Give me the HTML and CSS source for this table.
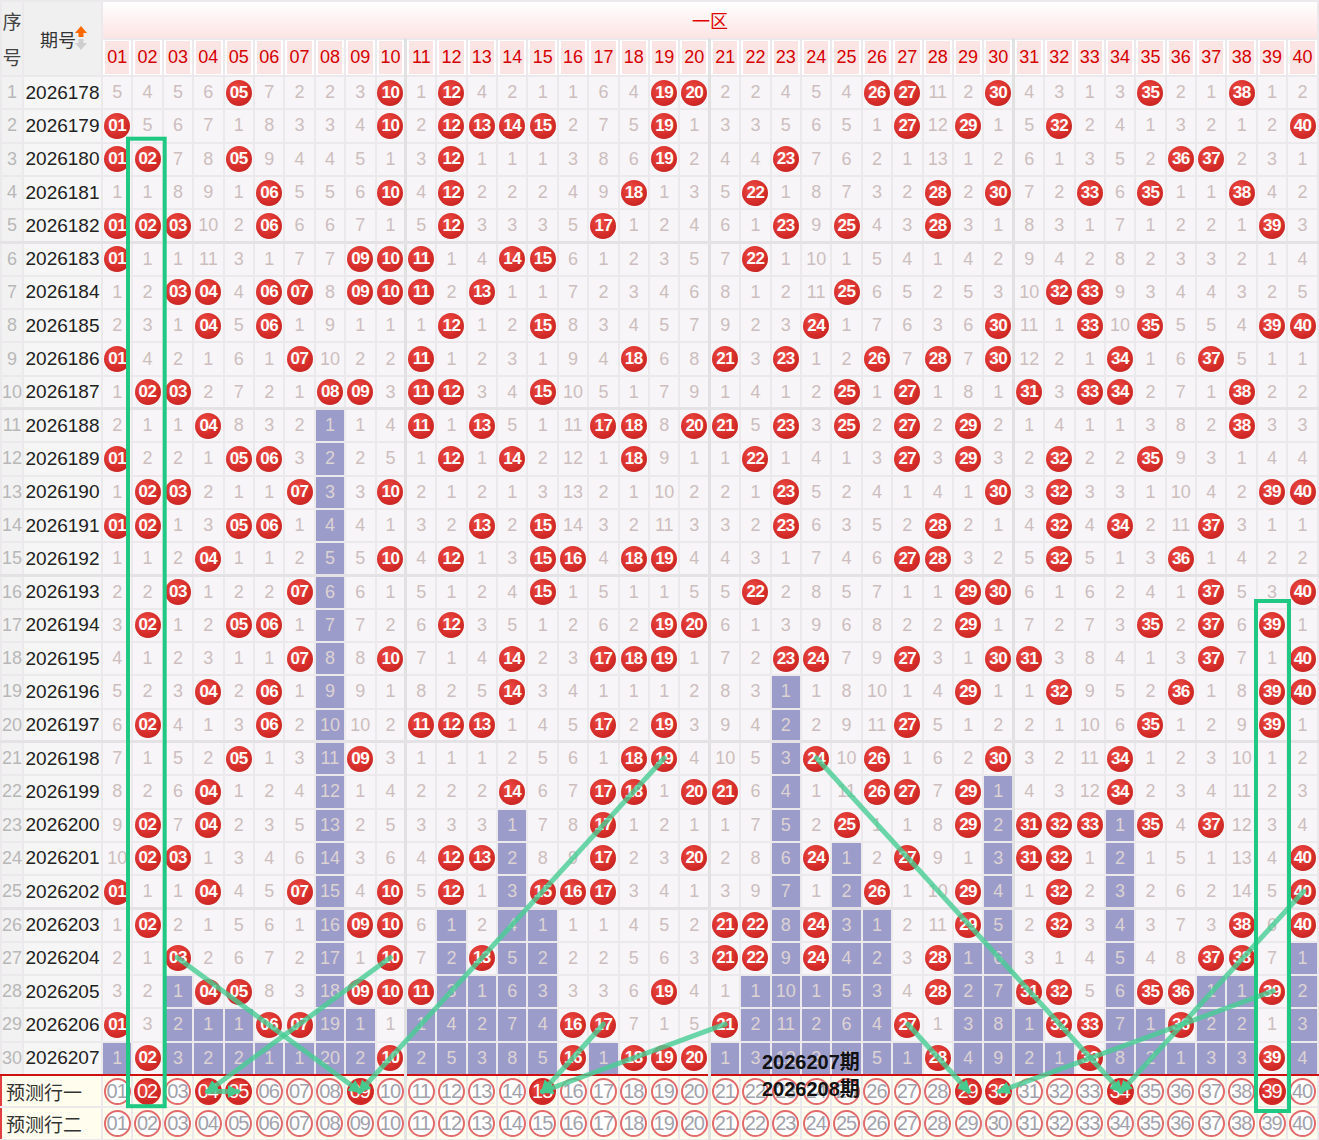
FILE: index.html
```html
<!DOCTYPE html>
<html lang="zh-CN">
<head>
<meta charset="utf-8">
<title>一区走势图</title>
<link rel="stylesheet" href="styles.css">
</head>
<body>
<div class="chart">
  <table class="grid">
    <colgroup><col class="c-idx"><col class="c-no"></colgroup>
    <thead>
      <tr class="h1">
        <th class="idx-h" rowspan="2"><span>序</span><span>号</span></th>
        <th class="no-h" rowspan="2"><span class="no-t">期号</span><svg class="sort" width="12" height="24" viewBox="0 0 12 24"><path d="M6 0 L12 7 H8.5 V11 H3.5 V7 H0 Z" fill="#ff6a00"/><path d="M3.5 13 H8.5 V17 H12 L6 24 L0 17 H3.5 Z" fill="#cfcfcf"/></svg></th>
        <th class="zone" colspan="40">一区</th>
      </tr>
      <tr class="h2" id="h2"></tr>
    </thead>
    <tbody id="body"></tbody>
    <tfoot id="foot"></tfoot>
  </table>
  <svg class="overlay" width="1319" height="1140" viewBox="0 0 1319 1140">
    <defs>
      <marker id="ah" viewBox="0 0 10 10" refX="8" refY="5" markerWidth="2.6" markerHeight="2.6" orient="auto">
        <path d="M0 0 L10 5 L0 10 Z" fill="#46c98f"/>
      </marker>
    </defs>
    <g class="tracks" marker-end="url(#ah)">
      <line x1="177.1" y1="957.5" x2="359.8" y2="1091.5"/>
      <line x1="390.3" y1="957.5" x2="207.6" y2="1091.5"/>
      <line x1="207.6" y1="1091.5" x2="238.0" y2="1091.5"/>
      <line x1="664.3" y1="758.0" x2="359.8" y2="1091.5"/>
      <line x1="603.4" y1="1024.2" x2="542.5" y2="1091.5"/>
      <line x1="725.2" y1="1024.2" x2="542.5" y2="1091.5"/>
      <line x1="816.6" y1="758.0" x2="1121.1" y2="1091.5"/>
      <line x1="907.9" y1="1024.2" x2="968.8" y2="1091.5"/>
      <line x1="1273.3" y1="990.9" x2="999.3" y2="1091.5"/>
      <line x1="1303.8" y1="891.1" x2="1121.1" y2="1091.5"/>
    </g>
    <rect class="box" x="128" y="138.7" width="36.7" height="967.5"/>
    <rect class="box" x="1256" y="601" width="33" height="510"/>
  </svg>
  <div class="caption"><div>2026207期</div><div>2026208期</div></div>
</div>
<script src="script.js"></script>
</body>
</html>
```

FILE: styles.css
```css
* { box-sizing: border-box; }
html, body { margin: 0; padding: 0; background: #fff; }
body { font-family: "Liberation Sans", Arial, "Noto Sans CJK SC", sans-serif; }

.chart { position: relative; width: 1319px; height: 1140px; overflow: hidden; }

.grid { width: 1319px; table-layout: fixed; border-collapse: collapse; }
.c-idx { width: 22px; }
.c-no { width: 79px; }

.grid th, .grid td {
  padding: 0;
  text-align: center;
  vertical-align: middle;
  border: 2px solid #ebe9eb;
  overflow: hidden;
  white-space: nowrap;
  font-weight: normal;
}

.h1 { height: 37.5px; }
.h2 { height: 37.5px; }

.idx-h { background: #f0f0f0; color: #444; font-size: 19px; line-height: 36px; font-family: "Noto Sans CJK SC", sans-serif; }
.idx-h span { display: block; }
.no-h { background: #f0f0f0; color: #333; font-size: 18px; }
.no-t { font-family: "Noto Sans CJK SC", sans-serif; vertical-align: middle; position: relative; left: 2px; }
.sort { vertical-align: middle; margin-left: 1px; position: relative; top: -1px; }

.zone { background: linear-gradient(#ffffff, #fde4e4); color: #e00000; font-size: 18px; font-family: "Noto Sans CJK SC", sans-serif; }

.hn { background: #fff; }
.hn span { display: block; margin: 0 2px; height: 33px; line-height: 33px; background: #fbe4e4; color: #d60000; font-size: 18px; }

tbody tr { height: 33.3px; }
.grid td { background: #f7f5f7; color: #cdbebe; font-size: 18px; }
.grid td.idx { background: #f2f2f2; color: #b8b8b8; font-size: 18px; }
.grid td.no { background: #f6f6f6; color: #222; font-size: 19px; }
.grid td.p { background: #9c9ccb; color: #dcd3d3; }
.grid .g { border-left: 3px solid #e2e1e2; }
.grid tr.sep td { border-bottom: 3px solid #e4e2e4; }
.grid tr.last td { border-bottom: 2px solid #cf1010; }

.ball {
  display: inline-block;
  width: 26px;
  height: 26px;
  border-radius: 50%;
  background: radial-gradient(circle at 40% 35%, #ee4c44 0%, #d62d2a 55%, #b91c1c 100%);
  color: #fff;
  font-weight: bold;
  font-size: 17px;
  line-height: 26px;
  letter-spacing: -0.5px;
  vertical-align: middle;
}

tfoot tr { height: 32.5px; }
.grid tfoot td { background: #fffdee; }
.grid td.lab { text-align: left; padding-left: 4px; color: #333; font-size: 19px; font-family: "Noto Sans CJK SC", sans-serif; border-left: 2px solid #e04040; }

.pc {
  display: inline-block;
  width: 27px;
  height: 27px;
  border-radius: 50%;
  border: 2px solid #e26a6a;
  background: #fff;
  color: #a2a2ab;
  font-size: 20px;
  line-height: 23px;
  letter-spacing: -1px;
  text-indent: -1px;
  vertical-align: middle;
}
.pc.on {
  border-color: #d42826;
  background: radial-gradient(circle at 40% 35%, #ee4c44 0%, #d62d2a 55%, #b91c1c 100%);
  color: #fff;
}

.overlay { position: absolute; left: 0; top: 0; pointer-events: none; }
.tracks line { stroke: rgb(70, 205, 148); stroke-opacity: 0.8; stroke-width: 5; stroke-linecap: round; fill: none; }
.box { fill: none; stroke: #1fc983; stroke-width: 4; }

.caption {
  position: absolute;
  left: 762px;
  top: 1049px;
  font-size: 20px;
  font-weight: bold;
  line-height: 27px;
  color: #111;
  font-family: "Liberation Sans", "Noto Sans CJK SC", sans-serif;
}
```

FILE: script.js
```js
(function () {
  var hits = [
    [5,10,12,19,20,26,27,30,35,38],
    [1,10,12,13,14,15,19,27,29,32,40],
    [1,2,5,12,19,23,36,37],
    [6,10,12,18,22,28,30,33,35,38],
    [1,2,3,6,12,17,23,25,28,39],
    [1,9,10,11,14,15,22],
    [3,4,6,7,9,10,11,13,25,32,33],
    [4,6,12,15,24,30,33,35,39,40],
    [1,7,11,18,21,23,26,28,30,34,37],
    [2,3,8,9,11,12,15,25,27,31,33,34,38],
    [4,11,13,17,18,20,21,23,25,27,29,38],
    [1,5,6,12,14,18,22,27,29,32,35],
    [2,3,7,10,23,30,32,39,40],
    [1,2,5,6,13,15,23,28,32,34,37],
    [4,10,12,15,16,18,19,27,28,32,36],
    [3,7,15,22,29,30,37,40],
    [2,5,6,12,19,20,29,35,37,39],
    [7,10,14,17,18,19,23,24,27,30,31,37,40],
    [4,6,14,29,32,36,39,40],
    [2,6,11,12,13,17,19,27,35,39],
    [5,9,18,19,24,26,30,34],
    [4,14,17,18,20,21,26,27,29,34],
    [2,4,17,25,29,31,32,33,35,37],
    [2,3,12,13,17,20,24,27,31,32,40],
    [1,4,7,10,12,15,16,17,26,29,32,40],
    [2,9,10,21,22,24,29,32,38,40],
    [3,10,13,21,22,24,28,37,38],
    [4,5,9,10,11,19,28,31,32,35,36,39],
    [1,6,7,16,17,21,27,32,33,36],
    [2,10,16,18,19,20,28,33,39]
  ];
  var init = [5,4,5,6,0,7,2,2,3,0,1,0,4,2,1,1,6,4,0,0,2,2,4,5,4,0,0,11,2,0,4,3,1,3,0,2,1,0,1,2];
  var pred1 = [2,4,5,9,15,29,30,34,39];

  function pad(n) { return (n < 10 ? '0' : '') + n; }
  function grp(c) { return (c % 10 === 0 && c > 0) ? 'g' : ''; }

  var c, r, html = '';
  for (c = 0; c < 40; c++) {
    html += '<th class="hn' + (grp(c) ? ' g' : '') + '"><span>' + pad(c + 1) + '</span></th>';
  }
  document.getElementById('h2').innerHTML = html;

  var last = [];
  for (c = 0; c < 40; c++) {
    last[c] = 0;
    for (r = 0; r < 30; r++) { if (hits[r].indexOf(c + 1) >= 0) last[c] = r + 1; }
  }

  var m = init.map(function (v) { return v - 1; });
  var rows = '';
  for (r = 0; r < 30; r++) {
    var rc = [];
    if ((r + 1) % 5 === 0 && r < 29) rc.push('sep');
    if (r === 29) rc.push('last');
    rows += '<tr' + (rc.length ? ' class="' + rc.join(' ') + '"' : '') + '>';
    rows += '<td class="idx">' + (r + 1) + '</td><td class="no">' + (2026178 + r) + '</td>';
    for (c = 0; c < 40; c++) {
      var k = [];
      if (grp(c)) k.push('g');
      if (hits[r].indexOf(c + 1) >= 0) {
        m[c] = 0;
        rows += '<td' + (k.length ? ' class="' + k.join(' ') + '"' : '') + '><span class="ball">' + pad(c + 1) + '</span></td>';
      } else {
        m[c]++;
        if (r + 1 > last[c]) k.push('p');
        rows += '<td' + (k.length ? ' class="' + k.join(' ') + '"' : '') + '>' + m[c] + '</td>';
      }
    }
    rows += '</tr>';
  }
  document.getElementById('body').innerHTML = rows;

  var foot = '';
  var labels = ['预测行一', '预测行二'];
  for (r = 0; r < 2; r++) {
    foot += '<tr><td class="lab" colspan="2">' + labels[r] + '</td>';
    for (c = 0; c < 40; c++) {
      var on = (r === 0 && pred1.indexOf(c + 1) >= 0);
      foot += '<td' + (grp(c) ? ' class="g"' : '') + '><span class="pc' + (on ? ' on' : '') + '">' + pad(c + 1) + '</span></td>';
    }
    foot += '</tr>';
  }
  document.getElementById('foot').innerHTML = foot;
})();
```
